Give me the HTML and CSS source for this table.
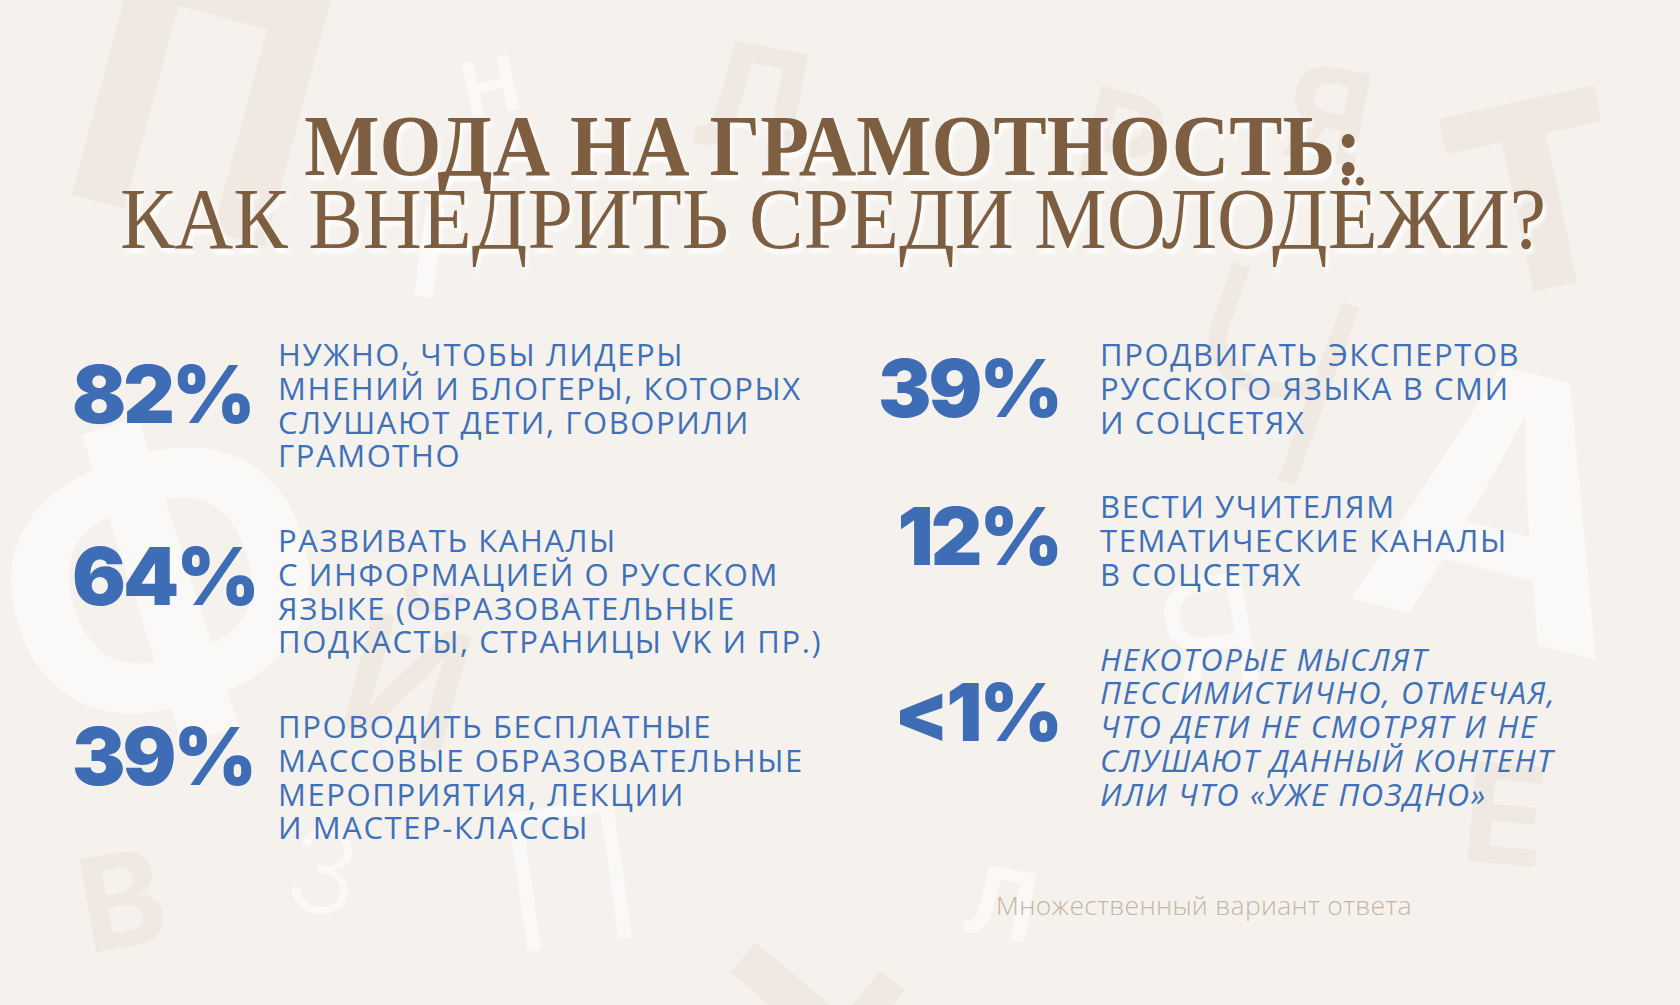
FILE: index.html
```html
<!DOCTYPE html>
<html lang="ru">
<head>
<meta charset="utf-8">
<title>Мода на грамотность</title>
<link rel="stylesheet" href="styles.css">
</head>
<body>
<div class="canvas">
  <div class="bg" aria-hidden="true">
    <span class="bl beige l-p">П</span>
    <span class="bl white l-n">Н</span>
    <span class="bl white l-i">I</span>
    <span class="bl beige l-l">Л</span>
    <span class="bl beige l-r">Р</span>
    <span class="bl beige l-ya">Я</span>
    <span class="bl beige l-t">Т</span>
    <span class="bl white l-f">Ф</span>
    <span class="bl beige l-y">Й</span>
    <span class="bl beige l-ch">Ч</span>
    <span class="bl white l-a">А</span>
    <span class="bl white l-ya2">Я</span>
    <span class="bl beige l-v">В</span>
    <span class="bl white l-z">З</span>
    <span class="bl white l-p2">П</span>
    <span class="bl beige l-lat">L</span>
    <span class="bl white l-l2">Л</span>
    <span class="bl beige l-e">Е</span>
  </div>

  <main class="content">
    <h1 class="title">
      <span class="title-line title-bold">МОДА НА ГРАМОТНОСТЬ:</span>
      <span class="title-line title-reg">КАК ВНЕДРИТЬ СРЕДИ МОЛОДЁЖИ?</span>
    </h1>

    <section class="stats">
      <div class="col col-left">
        <div class="stat">
          <div class="num pt16">82%</div>
          <p class="txt">НУЖНО, ЧТОБЫ ЛИДЕРЫ<br>МНЕНИЙ И БЛОГЕРЫ, КОТОРЫХ<br>СЛУШАЮТ ДЕТИ, ГОВОРИЛИ<br>ГРАМОТНО</p>
        </div>
        <div class="stat">
          <div class="num pt12">64%</div>
          <p class="txt">РАЗВИВАТЬ КАНАЛЫ<br>С ИНФОРМАЦИЕЙ О РУССКОМ<br>ЯЗЫКЕ (ОБРАЗОВАТЕЛЬНЫЕ<br>ПОДКАСТЫ, СТРАНИЦЫ VK И ПР.)</p>
        </div>
        <div class="stat">
          <div class="num pt6">39%</div>
          <p class="txt">ПРОВОДИТЬ БЕСПЛАТНЫЕ<br>МАССОВЫЕ ОБРАЗОВАТЕЛЬНЫЕ<br>МЕРОПРИЯТИЯ, ЛЕКЦИИ<br>И МАСТЕР-КЛАССЫ</p>
        </div>
      </div>
      <div class="col col-right">
        <div class="stat">
          <div class="num pt10">39%</div>
          <p class="txt">ПРОДВИГАТЬ ЭКСПЕРТОВ<br>РУССКОГО ЯЗЫКА В СМИ<br>И СОЦСЕТЯХ</p>
        </div>
        <div class="stat">
          <div class="num pt6">12%</div>
          <p class="txt">ВЕСТИ УЧИТЕЛЯМ<br>ТЕМАТИЧЕСКИЕ КАНАЛЫ<br>В СОЦСЕТЯХ</p>
        </div>
        <div class="stat">
          <div class="num pt29">&lt;1%</div>
          <p class="txt txt-italic">НЕКОТОРЫЕ МЫСЛЯТ<br>ПЕССИМИСТИЧНО, ОТМЕЧАЯ,<br>ЧТО ДЕТИ НЕ СМОТРЯТ И НЕ<br>СЛУШАЮТ ДАННЫЙ КОНТЕНТ<br>ИЛИ ЧТО «УЖЕ ПОЗДНО»</p>
        </div>
      </div>
    </section>

    <p class="note">Множественный вариант ответа</p>
  </main>
</div>
</body>
</html>
```

FILE: styles.css
```css
* { box-sizing: border-box; }

html, body {
  margin: 0;
  padding: 0;
  background: #f5f2ed;
}

.canvas {
  position: relative;
  width: 1680px;
  height: 1005px;
  overflow: hidden;
  background: #f5f2ed;
}

/* ---------- decorative background letters ---------- */
.bg {
  position: absolute;
  inset: 0;
  z-index: 0;
}

.bl {
  position: absolute;
  display: block;
  line-height: 1;
  font-family: "Inter", "Open Sans", sans-serif;
  font-weight: 700;
  transform-origin: center center;
  white-space: nowrap;
}

.beige { color: #efe9e2; }
.white { color: #faf9f7; }

.l-p   { left: 68px;  top: -84px; font-size: 358px; font-weight: 800; transform: rotate(15deg) scaleX(0.88); }
.l-n   { left: 462px; top: 48px;  font-size: 76px;  transform: rotate(-12deg); }
.l-i   { left: 412px; top: 190px; font-size: 124px; transform: rotate(8deg); }
.l-l   { left: 696px; top: 25px;  font-size: 150px; transform: rotate(11deg); }
.l-r   { left: 1080px; top: 75px; font-size: 130px; transform: rotate(15deg); }
.l-ya  { left: 1286px; top: 50px; font-size: 130px; transform: rotate(10deg); }
.l-t   { left: 1448px; top: 65px; font-size: 260px; font-weight: 800; transform: rotate(-12deg); }
.l-f   { left: -7px;  top: 380px; font-size: 400px; transform: rotate(-18deg); }
.l-y   { left: 344px; top: 600px; font-size: 165px; font-weight: 600; transform: rotate(15deg); }
.l-ch  { left: 1175px; top: 245px; font-size: 260px; font-weight: 300; transform: rotate(20deg); }
.l-a   { left: 1371px; top: 322px; font-size: 360px; transform: rotate(14deg); }
.l-ya2 { left: 1159px; top: 555px; font-size: 165px; font-weight: 400; transform: rotate(-10deg); }
.l-v   { left: 79px;  top: 835px; font-size: 130px; transform: rotate(-10deg); }
.l-z   { left: 288px; top: 812px; font-size: 117px; font-weight: 300; transform: rotate(10deg); }
.l-p2  { left: 499px; top: 779px; font-size: 192px; font-weight: 300; transform: rotate(-8deg); }
.l-lat {
  left: 830px; top: 888px; font-size: 200px; font-weight: 900;
  transform-origin: 0.08em 0.864em;
  transform: rotate(-50deg);
}
.l-l2  { left: 965px; top: 855px; font-size: 96px;  transform: rotate(10deg); }
.l-e   { left: 1463px; top: 745px; font-size: 138px; transform: rotate(5deg); }

/* ---------- content ---------- */
.content {
  position: relative;
  z-index: 1;
  padding-top: 110px;
}

.title {
  margin: 0;
  padding-right: 14px;
  text-align: center;
  font-family: "Liberation Serif", "Times New Roman", serif;
  font-size: 86px;
  line-height: 73px;
  color: #7d5e40;
  text-shadow: 3px 5px 4px rgba(255, 255, 255, 0.95);
}

.title-line {
  display: block;
  white-space: nowrap;
  transform-origin: center center;
}

.title-bold {
  font-weight: 700;
  transform: scaleX(0.927);
}

.title-reg {
  font-weight: 400;
  transform: scaleX(0.95);
}

.stats {
  display: grid;
  grid-template-columns: 770px 1fr;
  margin-top: 82px;
  padding-left: 72px;
}

.col {
  display: flex;
  flex-direction: column;
  gap: 51px;
}

.stat {
  display: flex;
  align-items: flex-start;
}

.num {
  flex: none;
  font-family: "Inter", "Open Sans", sans-serif;
  font-weight: 900;
  font-size: 80px;
  line-height: 1;
  color: #3e6cb5;
  letter-spacing: -3px;
  white-space: nowrap;
}

.col-left .num {
  width: 206px;
  text-align: left;
}

.col-right .num {
  width: 218px;
  margin-right: 40px;
  text-align: right;
}

.pt6  { padding-top: 6px; }
.pt10 { padding-top: 10px; }
.pt12 { padding-top: 12px; }
.pt16 { padding-top: 16px; }
.pt29 { padding-top: 29px; }

.txt {
  margin: 0;
  font-family: "Open Sans", "Liberation Sans", sans-serif;
  font-weight: 400;
  font-size: 31px;
  line-height: 33.75px;
  letter-spacing: 1.6px;
  color: #4070b8;
  white-space: nowrap;
}

.txt-italic {
  font-style: italic;
}

.note {
  margin: 43px 0 0 996px;
  font-family: "Open Sans", "Liberation Sans", sans-serif;
  font-weight: 300;
  font-size: 26.5px;
  line-height: 34px;
  letter-spacing: 0.3px;
  color: #c6b5a5;
  white-space: nowrap;
}
```
